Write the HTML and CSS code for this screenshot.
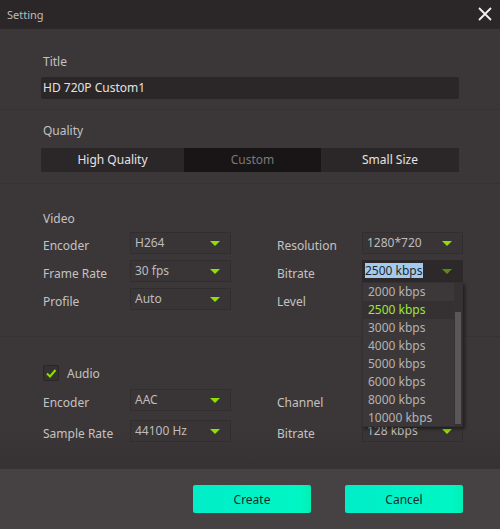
FILE: index.html
```html
<!DOCTYPE html>
<html lang="en">
<head>
  <meta charset="UTF-8" />
  <meta name="viewport" content="width=device-width, initial-scale=1.0" />
  <title>Setting</title>
  <link rel="stylesheet" href="styles.css">
</head>
<body>
  <div class="dialog">
    <div class="titlebar">
      <span class="titlebar-text">Setting</span>
      <svg class="close" width="14" height="14" viewBox="0 0 14 14">
        <path d="M1 1 L13 13 M13 1 L1 13" stroke="#f2f2f2" stroke-width="1.8" fill="none" />
      </svg>
    </div>

    <div class="section section-title">
      <div class="section-label">Title</div>
      <div class="text-input">HD 720P Custom1</div>
    </div>

    <div class="section section-quality">
      <div class="section-label">Quality</div>
      <div class="segmented">
        <div class="seg">High Quality</div>
        <div class="seg active">Custom</div>
        <div class="seg">Small Size</div>
      </div>
    </div>

    <div class="section section-video">
      <div class="section-label">Video</div>
      <div class="fields">
        <div class="field-label">Encoder</div>
        <div class="select"><span>H264</span><i class="arrow"></i></div>
        <div class="field-label right">Resolution</div>
        <div class="select"><span>1280*720</span><i class="arrow"></i></div>

        <div class="field-label">Frame Rate</div>
        <div class="select"><span>30 fps</span><i class="arrow"></i></div>
        <div class="field-label right">Bitrate</div>
        <div class="select open">
          <span class="selected-text">2500 kbps</span><i class="arrow dim"></i>
          <div class="dropdown">
            <div class="options">
              <div class="option">2000 kbps</div>
              <div class="option current">2500 kbps</div>
              <div class="option">3000 kbps</div>
              <div class="option">4000 kbps</div>
              <div class="option">5000 kbps</div>
              <div class="option">6000 kbps</div>
              <div class="option">8000 kbps</div>
              <div class="option">10000 kbps</div>
            </div>
            <div class="scrollbar"><div class="thumb"></div></div>
          </div>
        </div>

        <div class="field-label">Profile</div>
        <div class="select"><span>Auto</span><i class="arrow"></i></div>
        <div class="field-label right">Level</div>
        <!-- hidden under the open list -->
        <div class="select"><span></span><i class="arrow"></i></div>
      </div>
    </div>

    <div class="section section-audio">
      <div class="check-row">
        <span class="checkbox">
          <svg width="12" height="12" viewBox="0 0 12 12">
            <path d="M2 6.5 L5 9.5 L10.5 3" stroke="#8fe000" stroke-width="2" fill="none" />
          </svg>
        </span>
        <span class="check-label">Audio</span>
      </div>
      <div class="fields audio-fields">
        <div class="field-label">Encoder</div>
        <div class="select"><span>AAC</span><i class="arrow"></i></div>
        <div class="field-label right">Channel</div>
        <div class="select"><span></span><i class="arrow"></i></div>

        <div class="field-label">Sample Rate</div>
        <div class="select"><span>44100 Hz</span><i class="arrow"></i></div>
        <div class="field-label right">Bitrate</div>
        <div class="select"><span>128 kbps</span><i class="arrow"></i></div>
      </div>
    </div>

    <div class="footer">
      <button class="btn">Create</button>
      <button class="btn">Cancel</button>
    </div>
  </div>
</body>
</html>
```

FILE: styles.css
```css
body {
  margin: 0;
  font-family: 'Noto Sans', 'Open Sans', sans-serif;
  font-size: 12px;
  background: #3b3738;
  color: #c4c2c3;
}

.dialog {
  width: 500px;
  height: 529px;
  display: flex;
  flex-direction: column;
  background: #3b3738;
}

.titlebar {
  height: 29px;
  display: flex;
  justify-content: space-between;
  align-items: center;
  padding: 0 8px 0 7px;
  background: #2b2728;
  flex-shrink: 0;
}

.titlebar-text {
  font-size: 11px;
  color: #bdbbbc;
}

.close {
  margin-top: -2px;
}

.section {
  padding: 0 41px;
  border-bottom: 1px solid #363233;
}

.section-label {
  height: 16px;
  line-height: 16px;
  padding-left: 2px;
  color: #c4c2c3;
}

.section-title {
  padding-top: 25px;
  padding-bottom: 10px;
}

.text-input {
  margin-top: 7px;
  height: 22px;
  line-height: 22px;
  padding-left: 2px;
  background: #2b2728;
  color: #e2e2e2;
  border-radius: 2px;
}

.section-quality {
  padding-top: 13px;
  padding-bottom: 11px;
}

.segmented {
  margin-top: 9px;
  display: flex;
  height: 24px;
  background: #2b2728;
}

.seg {
  line-height: 24px;
  text-align: center;
  color: #e4e4e4;
}

.seg:nth-child(1) {
  width: 143px;
}

.seg:nth-child(2) {
  width: 137px;
}

.seg:nth-child(3) {
  flex: 1;
}

.seg.active {
  background: #181516;
  color: #7b797a;
}

.section-video {
  padding-top: 27px;
  padding-bottom: 26px;
}

.fields {
  margin-top: 5px;
  display: grid;
  grid-template-columns: 89px 101px 131px 101px;
  grid-auto-rows: 22px;
  row-gap: 6px;
  align-items: center;
}

.field-label {
  padding-left: 2px;
  padding-top: 4px;
  color: #c4c2c3;
}

.field-label.right {
  padding-left: 46px;
}

.select {
  position: relative;
  height: 22px;
  box-sizing: border-box;
  display: flex;
  justify-content: space-between;
  align-items: center;
  padding: 0 10px 2px 4px;
  border: 1px solid #322e2f;
  background: #393536;
  color: #bebcbd;
}

.arrow {
  width: 0;
  height: 0;
  border-left: 5px solid transparent;
  border-right: 5px solid transparent;
  border-top: 5px solid #8fe000;
  margin-top: 2px;
}

.arrow.dim {
  border-top-color: #5c8a14;
}

.select.open {
  background: #2d292a;
  border-color: #2d292a;
  padding-left: 2px;
}

.selected-text {
  background: #a3cbef;
  color: #23272c;
  line-height: 15px;
}

.dropdown {
  position: absolute;
  top: calc(100% + 1px);
  left: -1px;
  width: 101px;
  height: 145px;
  display: flex;
  background: #3c3839;
  border: 1px solid #343031;
  box-sizing: border-box;
  box-shadow: 2px 2px 3px rgba(0, 0, 0, 0.45);
  z-index: 10;
}

.options {
  flex: 1;
}

.option {
  height: 18px;
  line-height: 18px;
  padding-left: 5px;
  color: #b4b2b3;
}

.option.current {
  background: #353132;
  color: #9ee637;
}

.scrollbar {
  width: 8px;
  background: #363233;
  display: flex;
  flex-direction: column;
  justify-content: flex-end;
}

.thumb {
  height: 112px;
  margin: 0 1px 2px 1px;
  background: #5b5759;
}

.section-audio {
  padding-top: 28px;
  padding-bottom: 27px;
  border-bottom: none;
  background: linear-gradient(#3b3738 70%, #363233);
}

.check-row {
  display: flex;
  align-items: center;
  height: 16px;
  padding-left: 2px;
}

.checkbox {
  width: 14px;
  height: 14px;
  border: 1px solid #2a2627;
  background: #353132;
  border-radius: 2px;
  display: flex;
  align-items: center;
  justify-content: center;
}

.check-label {
  margin-left: 8px;
  color: #c4c2c3;
}

.audio-fields {
  margin-top: 8px;
  row-gap: 9px;
}

.footer {
  flex: 1;
  display: flex;
  justify-content: flex-end;
  align-items: flex-start;
  gap: 34px;
  padding: 16px 37px 0 0;
  background: #464243;
}

.btn {
  width: 118px;
  height: 28px;
  border: none;
  border-radius: 2px;
  background: linear-gradient(90deg, #00edc9, #00f7c4 90%, #00f0b4);
  color: #1f2a28;
  font-family: 'Noto Sans', 'Open Sans', sans-serif;
  font-size: 12px;
  cursor: pointer;
}
```
